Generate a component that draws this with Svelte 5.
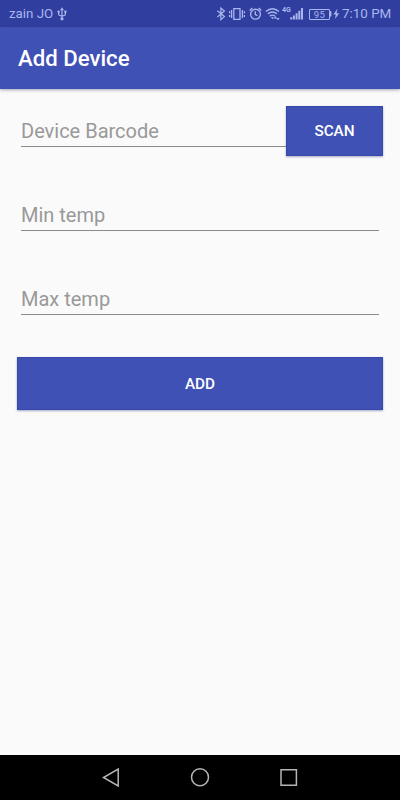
<script>
  let barcode = $state('');
  let minTemp = $state('');
  let maxTemp = $state('');
</script>

<div class="screen">
  <div class="status">
    <span class="carrier">zain JO</span>
    <svg class="usb" width="10" height="14" viewBox="57 7 10 14" fill="none" stroke="currentColor" stroke-width="1.2">
      <path d="M62 9v9M58.6 11.5v2.7q0 1.3 3.4 1.8q3.4-.5 3.4-1.8v-2.7" />
      <path d="M60.1 10.2 62 7.2 63.9 10.2z" fill="currentColor" stroke="none" />
      <circle cx="58.6" cy="11.8" r="1.2" fill="currentColor" stroke="none" />
      <path d="M64.3 10.6h2.2v2.2h-2.2z" fill="currentColor" stroke="none" />
      <circle cx="62" cy="18.8" r="1.6" fill="currentColor" stroke="none" />
    </svg>

    <div class="indicators">
      <svg width="12" height="16" viewBox="215 6 12 16" fill="none" stroke="currentColor" stroke-width="1.25">
        <path d="m217.4 10.7 7 5.9-3.5 3V8l3.5 3-7 5.9" />
      </svg>
      <svg width="20" height="16" viewBox="227 6 20 16" fill="none" stroke="currentColor" stroke-width="1.3">
        <path d="M233.8 8.6h6.2v10.8h-6.2zM231.6 10v8M242.4 10v8M229.6 11.2v2M229.6 15v2M244.4 11.2v2M244.4 15v2" />
      </svg>
      <svg width="17" height="16" viewBox="247 6 17 16" fill="none" stroke="currentColor" stroke-width="1.35">
        <circle cx="255.5" cy="14.2" r="4.9" />
        <path d="M255.3 11.3v3.2l2.2 1.2M249.6 10.4l2.8-2.4M261.4 10.4l-2.8-2.4" />
      </svg>
      <svg width="18" height="16" viewBox="264 6 18 16" fill="none" stroke="currentColor" stroke-width="1.4">
        <path d="M265.8 11.5q6.6-5.5 13.2 0M267.8 13.8q4.6-3.7 9.2 0M269.8 16.1q2.6-2 5.2 0" />
        <path d="m270.8 17.3 1.7 2 1.5-2zM273.9 18.5l1.6-2.4 1.6 2.4zM276.3 17.9h3.4l-1.7 2.4z" fill="currentColor" stroke="none" />
      </svg>
      <span class="network">4G</span>
      <svg width="15" height="16" viewBox="290 6 15 16" fill="currentColor">
        <path d="M290.2 17.3h2v2.2h-2zM292.9 15.5h2v4h-2zM295.6 13.3h2v6.2h-2zM298.3 10.8h2v8.7h-2zM301 8h2v11.5h-2z" />
      </svg>
      <span class="battery">95</span>
      <svg width="10" height="16" viewBox="330 6 10 16" fill="currentColor">
        <path d="M330 11.2h1.4v5.4H330zM337.4 8.8l-4 5.6h2.4l-.8 4.6 4.2-5.7h-2.6z" />
      </svg>
      <span class="time">7:10 PM</span>
    </div>
  </div>

  <header><h1>Add Device</h1></header>

  <main>
    <div class="row">
      <input class="barcode" placeholder="Device Barcode" bind:value={barcode} />
      <button class="scan">SCAN</button>
    </div>
    <input class="min" placeholder="Min temp" bind:value={minTemp} />
    <input class="max" placeholder="Max temp" bind:value={maxTemp} />
    <button class="add">ADD</button>
  </main>

  <nav>
    <svg width="20" height="20" viewBox="101 767 20 20"><path d="M118.2 769v17l-14.7-8.5z" /></svg>
    <svg width="20" height="20" viewBox="190 767 20 20"><circle cx="200" cy="777.3" r="8.5" /></svg>
    <svg width="20" height="20" viewBox="279 767 20 20"><path d="M281 769.8h15.4v15.4H281z" /></svg>
  </nav>
</div>

<style>
  :global(body) { margin: 0; }
  .screen {
    width: 400px;
    height: 800px;
    display: flex;
    flex-direction: column;
    overflow: hidden;
    background: #fafafa;
    font-family: Roboto, sans-serif;
  }
  svg { display: block; flex: none; }
  .status {
    height: 27px;
    flex: none;
    display: flex;
    align-items: center;
    box-sizing: border-box;
    padding: 1px 9px 0;
    background: #303f9f;
    color: #a9b6ee;
  }
  .carrier { font-size: 13.3px; line-height: 16px; width: 48px; white-space: nowrap; }
  .indicators { display: flex; align-items: center; margin-left: auto; }
  .network {
    width: 8px;
    height: 16px;
    font-size: 7px;
    line-height: 9px;
    font-weight: 700;
    text-align: center;
  }
  .battery {
    box-sizing: border-box;
    width: 21px;
    height: 11px;
    margin-left: 4px;
    border: 1px solid currentColor;
    border-radius: 1px;
    font-size: 9.5px;
    line-height: 9px;
    letter-spacing: 0.3px;
    text-align: center;
  }
  .time { width: 49px; margin-left: 2px; font-size: 13.4px; line-height: 16px; white-space: nowrap; }
  header {
    height: 62px;
    flex: none;
    display: flex;
    align-items: center;
    padding: 0 18px 1px;
    box-sizing: border-box;
    background: #3f51b5;
    box-shadow: 0 1px 3px rgba(30, 40, 90, 0.4);
  }
  h1 { margin: 0; color: #fff; font-size: 22.2px; line-height: 28px; font-weight: 500; }
  main { flex: 1; display: flex; flex-direction: column; padding: 17px 17px 0; }
  .row { display: flex; height: 50px; }
  input {
    box-sizing: border-box;
    height: 32px;
    margin: 0 4px;
    padding: 0;
    border: 0;
    border-bottom: 1px solid #8b8b8b;
    border-radius: 0;
    outline: 0;
    background: transparent;
    color: #333;
    font: 400 20px Roboto, sans-serif;
  }
  input::placeholder { color: #999; opacity: 1; }
  .barcode { flex: 1; min-width: 0; height: 33px; margin: 8px 0 0 4px; padding: 3px 0 2px; }
  .min { margin-top: 43px; }
  .max { margin-top: 52px; }
  button {
    padding: 0;
    border: 0;
    background: #3f51b5;
    color: #fff;
    font: 500 15.3px Roboto, sans-serif;
    box-shadow: 0 1px 2px rgba(40, 50, 120, 0.4), inset 0 0 0 1px #3749a8;
  }
  .scan { width: 97px; height: 50px; }
  .add { height: 53px; margin-top: 42px; }
  nav {
    height: 45px;
    flex: none;
    display: flex;
    align-items: center;
    justify-content: center;
    gap: 69px;
    box-sizing: border-box;
    padding-bottom: 1px;
    background: #000;
  }
  nav svg { fill: none; stroke: #b5b5b5; stroke-width: 1.5; }
</style>
